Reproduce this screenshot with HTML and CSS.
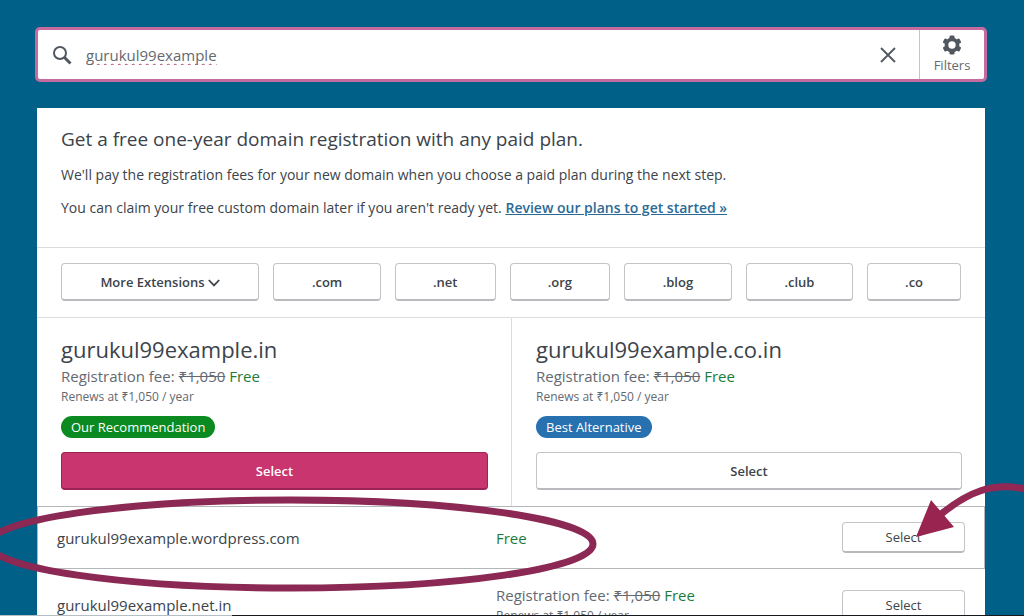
FILE: index.html
```html
<!DOCTYPE html>
<html lang="en">
<head>
<meta charset="utf-8">
<title>Choose a domain</title>
<meta name="viewport" content="width=device-width, initial-scale=1">
<link rel="stylesheet" href="styles.css">
</head>
<body>
<main class="page">
  <form class="search" role="search">
    <label class="search-icon" for="domain" aria-label="Search domains">
      <svg width="20" height="20" viewBox="0 0 20 20" fill="none" stroke="#50575e"><circle cx="8" cy="8" r="6" stroke-width="2"/><path d="M12.3 12.3 18.5 18.5" stroke-width="3"/></svg>
    </label>
    <input class="search-input" id="domain" type="text" value="gurukul99example" spellcheck="false">
    <button class="clear" type="button" aria-label="Clear search">
      <svg width="16" height="16" viewBox="0 0 16 16" fill="none" stroke="#50575e" stroke-width="1.8"><path d="M1 1 15 15M15 1 1 15"/></svg>
    </button>
    <button class="filters" type="button">
      <svg width="20" height="20" viewBox="0 0 20 20"><g fill="#50575e"><rect x="7.5" y=".5" width="5" height="19" rx="1.2"/><rect x="7.5" y=".5" width="5" height="19" rx="1.2" transform="rotate(60 10 10)"/><rect x="7.5" y=".5" width="5" height="19" rx="1.2" transform="rotate(120 10 10)"/><circle cx="10" cy="10" r="7.4"/></g><circle cx="10" cy="10" r="3.7" fill="#fff"/></svg>
      <span>Filters</span>
    </button>
  </form>

  <div class="card">
    <section class="intro">
      <h1 class="intro-title">Get a free one-year domain registration with any paid plan.</h1>
      <p class="intro-text">We'll pay the registration fees for your new domain when you choose a paid plan during the next step.</p>
      <p class="intro-text">You can claim your free custom domain later if you aren't ready yet. <a class="plans-link" href="#">Review our plans to get started »</a></p>
    </section>

    <div class="extensions">
      <button class="button ext-more" type="button">More Extensions
        <svg width="12" height="8" viewBox="0 0 12 8" fill="none" stroke="#3c434a" stroke-width="1.8"><path d="M.8 1 6 6.4 11.2 1"/></svg>
      </button>
      <button class="button ext-wide" type="button">.com</button>
      <button class="button ext" type="button">.net</button>
      <button class="button ext" type="button">.org</button>
      <button class="button ext-wide" type="button">.blog</button>
      <button class="button ext-wide" type="button">.club</button>
      <button class="button ext-slim" type="button">.co</button>
    </div>

    <div class="featured">
      <section class="offer">
        <h2 class="offer-name">gurukul99example.in</h2>
        <p class="fee">Registration fee: <del>₹1,050</del> <span class="free">Free</span></p>
        <p class="renewal">Renews at ₹1,050 / year</p>
        <span class="badge badge-green">Our Recommendation</span>
        <button class="button primary" type="button">Select</button>
      </section>
      <section class="offer">
        <h2 class="offer-name">gurukul99example.co.in</h2>
        <p class="fee">Registration fee: <del>₹1,050</del> <span class="free">Free</span></p>
        <p class="renewal">Renews at ₹1,050 / year</p>
        <span class="badge badge-blue">Best Alternative</span>
        <button class="button" type="button">Select</button>
      </section>
    </div>

    <section class="row row-active">
      <h3 class="row-name">gurukul99example.wordpress.com</h3>
      <p class="fee free">Free</p>
      <button class="button small" type="button">Select</button>
      <svg class="ring" width="640" height="100" viewBox="0 0 640 100" fill="none" aria-hidden="true"><ellipse cx="331" cy="50" rx="302" ry="44" stroke="#8b2853" stroke-width="7"/></svg>
      <svg class="arrow" width="124" height="64" viewBox="0 0 124 64" aria-hidden="true"><path d="M38 37C66 14 90 4 124 11" fill="none" stroke="#942854" stroke-width="7"/><path d="M14 59 29 22 52 49Z" fill="#98244f"/></svg>
    </section>
    <section class="row">
      <h3 class="row-name">gurukul99example.net.in</h3>
      <div>
        <p class="fee">Registration fee: <del>₹1,050</del> <span class="free">Free</span></p>
        <p class="renewal">Renews at ₹1,050 / year</p>
      </div>
      <button class="button small" type="button">Select</button>
    </section>
  </div>
</main>
<div class="edge"></div>
</body>
</html>
```
FILE: styles.css
```css
* { box-sizing: border-box; }

body {
  margin: 0;
  height: 100vh;
  overflow: hidden;
  background: #006088;
  color: #3c434a;
  font-family: "Open Sans", "Noto Sans", sans-serif;
  font-size: 14px;
  line-height: 20px;
}

h1, h2, h3, p { margin: 0; font-weight: 400; }

button, input { font: inherit; color: inherit; }

.page { padding: 27px 39px 0 37px; }

.search {
  display: flex;
  align-items: stretch;
  height: 55px;
  margin: 0 -2px 26px;
  overflow: hidden;
  background: #fff;
  border: 3px solid #c56ba0;
  border-radius: 5px;
}

.search-icon {
  display: flex;
  align-items: center;
  padding: 0 14px;
}

.search-input {
  flex: 1;
  min-width: 0;
  padding: 0;
  border: 0;
  outline: 0;
  background: none;
  color: #646970;
  font-size: 15px;
  text-decoration: underline wavy #b04058 1px;
  text-decoration-skip-ink: none;
  text-underline-offset: 2px;
}

.clear, .filters { border: 0; background: none; }

.clear {
  display: flex;
  align-items: center;
  justify-content: center;
  width: 62px;
}

.filters {
  display: flex;
  flex-direction: column;
  align-items: center;
  justify-content: center;
  width: 65px;
  padding: 0;
  border-left: 1px solid #c3c4c7;
  color: #646970;
  font-size: 13px;
}

.card { background: #fff; }

.intro {
  display: grid;
  gap: 12px;
  padding: 18px 24px 29px;
  border-bottom: 1px solid #dcdcde;
}

.intro-title { font-size: 19px; line-height: 26px; }
.intro-text { line-height: 21px; }
.plans-link { color: #2c6a96; font-weight: 600; }

.extensions {
  display: flex;
  gap: 14px;
  padding: 15px 24px 16px;
  border-bottom: 1px solid #dcdcde;
}

.button {
  height: 38px;
  padding: 0;
  background: #fff;
  border: 1px solid #c3c4c7;
  border-bottom: 2px solid #b9babd;
  border-radius: 4px;
  font-size: 13px;
  font-weight: 600;
}

.ext, .ext-wide, .ext-slim, .ext-more { flex-basis: 0; }
.ext { flex-grow: 101; }
.ext-wide { flex-grow: 108; }
.ext-slim { flex-grow: 94; }
.ext-more { flex-grow: 201; }

.featured {
  display: grid;
  grid-template-columns: 1fr 1fr;
}

.offer {
  display: flex;
  flex-direction: column;
  align-items: stretch;
  padding: 15px 23px 16px 24px;
}

.offer + .offer { border-left: 1px solid #dcdcde; }

.offer-name { font-size: 22px; line-height: 32px; }
.fee { color: #646970; font-size: 15px; line-height: 22px; }
.renewal { color: #646970; font-size: 12px; line-height: 20px; }
.fee .free, .fee.free { color: #1c7c38; }

.badge {
  align-self: flex-start;
  margin: 9px 0 14px;
  padding: 0 10px;
  border-radius: 11px;
  color: #fff;
  font-size: 13px;
  line-height: 22px;
}

.badge-green { background: #0a8a20; }
.badge-blue { background: #2771b1; }

.primary {
  background: #c9356e;
  border-color: #9b2457;
  color: #fff;
}

.row {
  position: relative;
  display: grid;
  grid-template-columns: 439fr 346fr 123px;
  align-items: center;
  min-height: 63px;
  padding: 0 20px;
}

.row:last-child { min-height: 72px; }
.row-active { border: 1px solid #b4b7ba; padding: 0 19px; }
.row-name { font-size: 15px; }
.small { height: 31px; font-weight: 500; }

.ring {
  position: absolute;
  top: -13px;
  left: -78px;
  pointer-events: none;
}

.arrow {
  position: absolute;
  top: -29px;
  right: -42px;
  pointer-events: none;
}

.edge {
  position: fixed;
  inset: auto 0 0;
  height: 1px;
  background: linear-gradient(to right, #b4bfc5 232px, #15191d 232px);
}
```
